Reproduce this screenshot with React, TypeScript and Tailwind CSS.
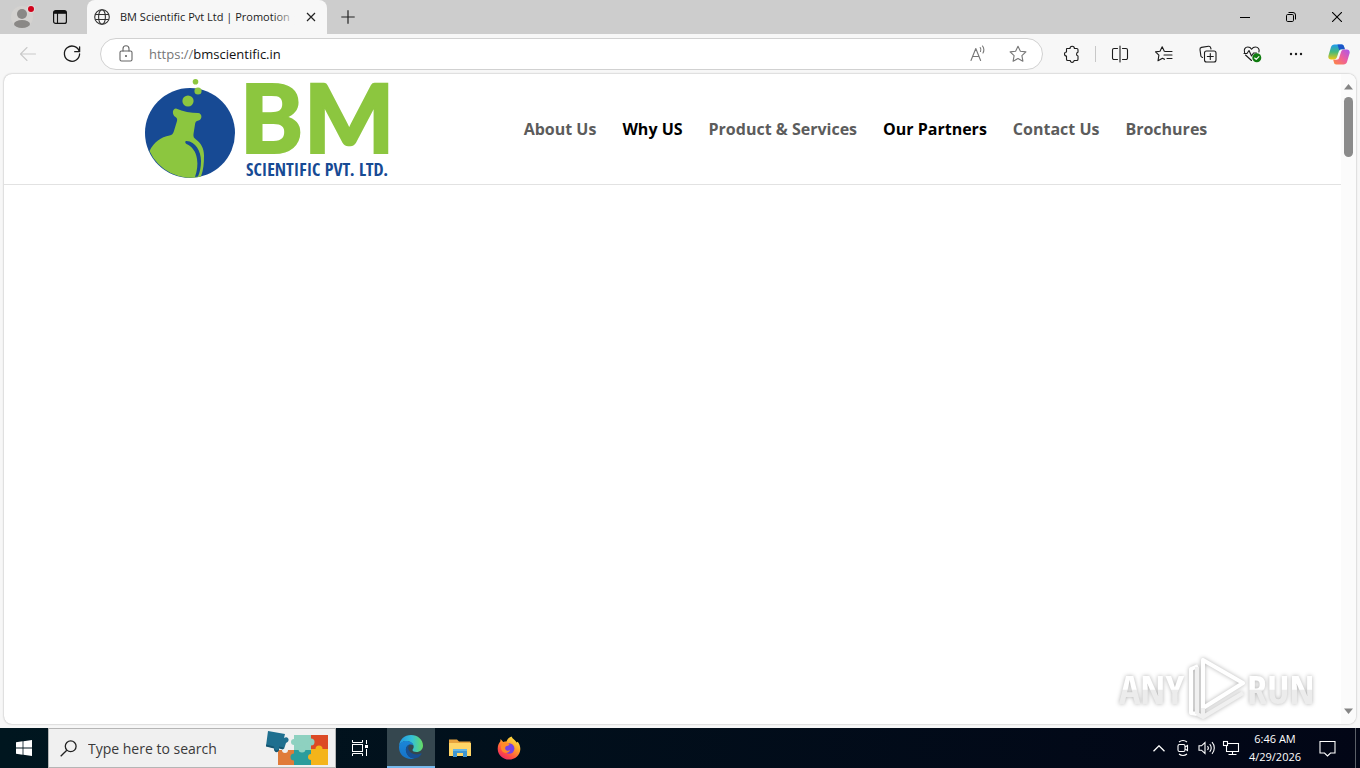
import type { ReactNode } from "react";

type IconButtonProps = {
  label: string;
  className?: string;
  children: ReactNode;
};

type NavLink = {
  title: string;
  active?: boolean;
};

const navLinks: NavLink[] = [
  { title: "About Us" },
  { title: "Why US", active: true },
  { title: "Product & Services" },
  { title: "Our Partners", active: true },
  { title: "Contact Us" },
  { title: "Brochures" },
];

const IconButton = ({ label, className = "", children }: IconButtonProps) => (
  <button
    aria-label={label}
    className={`flex shrink-0 items-center justify-center ${className}`}
  >
    {children}
  </button>
);

/* 20x20 line icon */
const Line = ({ children, color = "#1b1b1b" }: { children: ReactNode; color?: string }) => (
  <svg
    width="20"
    height="20"
    viewBox="0 0 20 20"
    fill="none"
    stroke={color}
    strokeWidth="1.1"
    strokeLinecap="round"
    strokeLinejoin="round"
  >
    {children}
  </svg>
);

const TabStrip = () => (
  <div className="flex h-[34px] shrink-0 bg-[#cdcdcd]">
    <div className="flex w-[87px] items-center">
      <IconButton label="Profile" className="h-full w-11">
        <svg width="28" height="28" viewBox="0 0 28 28">
          <circle cx="14" cy="14" r="11" fill="#d4d2d0" />
          <circle cx="14" cy="11" r="5" fill="#8a8886" />
          <ellipse cx="14" cy="21" rx="8" ry="4" fill="#8a8886" />
          <circle cx="23" cy="6" r="4" fill="#e4d6d6" />
          <circle cx="23" cy="6" r="3" fill="#d0021b" />
        </svg>
      </IconButton>
      <IconButton label="Tab actions" className="h-full w-8">
        <svg width="16" height="16" viewBox="0 0 16 16" fill="none" stroke="#111">
          <rect x="1.6" y="1.6" width="12.8" height="12.8" rx="2" strokeWidth="1.2" />
          <path d="M2 3.4h12" strokeWidth="2.8" />
          <path d="M5.5 4v10" strokeWidth="1.1" />
        </svg>
      </IconButton>
    </div>

    <div className="flex w-60 items-center rounded-t-lg bg-[#f7f7f7] pr-2 pl-[7px]">
      <svg width="16" height="16" viewBox="0 0 16 16" fill="none" stroke="#333" strokeWidth="1.1" className="shrink-0">
        <circle cx="8" cy="8" r="7.3" />
        <ellipse cx="8" cy="8" rx="3.4" ry="7.3" />
        <path d="M1.3 5.5h13.4M1.3 10.5h13.4" />
      </svg>
      <span className="relative ml-[10px] flex-1 text-[11px] whitespace-nowrap text-[#1b1b1b]">
        BM Scientific Pvt Ltd | Promotion
        <span className="absolute inset-y-0 right-[6px] w-6 bg-linear-to-r from-transparent to-[#f7f7f7]" />
      </span>
      <IconButton label="Close tab" className="size-4">
        <svg width="10" height="10" viewBox="0 0 10 10" stroke="#222" strokeWidth="1.2">
          <path d="M1 1l8 8M9 1l-8 8" />
        </svg>
      </IconButton>
    </div>

    <IconButton label="New tab" className="w-[42px]">
      <svg width="14" height="14" viewBox="0 0 14 14" stroke="#222" strokeWidth="1.2">
        <path d="M7 .3v13.4M.3 7h13.4" />
      </svg>
    </IconButton>

    <div className="ml-auto flex">
      <IconButton label="Minimize" className="w-[46px]">
        <svg width="10" height="10" viewBox="0 0 10 10" stroke="#000">
          <path d="M0 5.5h10" />
        </svg>
      </IconButton>
      <IconButton label="Restore" className="w-[46px]">
        <svg width="10" height="10" viewBox="0 0 10 10" fill="none" stroke="#000">
          <rect x=".5" y="2.5" width="7" height="7" rx="1.2" />
          <path d="M2.5.5H7A2.5 2.5 0 0 1 9.5 3v4.5" />
        </svg>
      </IconButton>
      <IconButton label="Close" className="w-[46px]">
        <svg width="10" height="10" viewBox="0 0 10 10" stroke="#000" strokeWidth="1.1">
          <path d="M0 0l10 10M10 0L0 10" />
        </svg>
      </IconButton>
    </div>
  </div>
);

const CopilotLogo = () => (
  <svg width="22" height="21" viewBox="0 0 22 21">
    <defs>
      <linearGradient id="cpA" x1="0" y1="0" x2="0" y2="1">
        <stop offset="0" stopColor="#1f9bf0" />
        <stop offset=".5" stopColor="#45b97c" />
        <stop offset="1" stopColor="#f2c811" />
      </linearGradient>
      <linearGradient id="cpB" x1="1" y1="0" x2="0" y2="1">
        <stop offset="0" stopColor="#a855f0" />
        <stop offset=".5" stopColor="#ee5f9c" />
        <stop offset="1" stopColor="#ff8a3c" />
      </linearGradient>
    </defs>
    <path d="M6.5.5h7.2c1.6 0 2 1 2.4 2.3l.7 2.4h-3.3c-1.6 0-2.3 1-2.7 2.3L9 13c-.5 1.6-1.3 2.5-3 2.5H3.2C.8 15.5-.1 13.7.5 11.4L3 3C3.5 1.4 4.6.5 6.5.5z" fill="url(#cpA)" />
    <path d="M9.5.5h4.2c1.6 0 2 1 2.4 2.3l.7 2.4h-3.3c-1.1 0-1.7.4-2.2 1.2z" fill="#1c55c8" />
    <path d="M15.5 20.5H8.3c-1.6 0-2-1-2.4-2.3l-.7-2.4h3.3c1.6 0 2.3-1 2.7-2.3L13 8c.5-1.6 1.3-2.5 3-2.5h2.8c2.4 0 3.3 1.8 2.7 4.1L19 18c-.5 1.6-1.6 2.5-3.5 2.5z" fill="url(#cpB)" />
  </svg>
);

const Toolbar = () => (
  <div className="flex h-10 shrink-0 items-center bg-[#f7f7f7] pl-[6px]">
    <IconButton label="Back" className="h-8 w-11">
      <Line color="#c9c9c9">
        <path d="M17.5 10H2.8M9 3.5L2.5 10 9 16.5" />
      </Line>
    </IconButton>
    <IconButton label="Refresh" className="h-8 w-11">
      <Line>
        <path d="M17.3 7.5A7.6 7.6 0 1 0 17.6 10M17.6 2.8v4.9h-4.9" strokeWidth="1.3" />
      </Line>
    </IconButton>

    <div className="ml-[6px] flex h-8 flex-1 items-center rounded-full border border-[#d1d1d1] bg-white pr-1 pl-[15px]">
      <Line color="#666">
        <rect x="4" y="7" width="12" height="10" rx="1.5" />
        <path d="M7 7V4.8a3 3 0 0 1 6 0V7" />
        <circle cx="10" cy="12" r=".5" fill="#666" />
      </Line>
      <label htmlFor="address" className="ml-[13px] text-[13px] leading-[22px] text-[#767676]">
        https://
      </label>
      <input
        id="address"
        defaultValue="bmscientific.in"
        className="min-w-0 flex-1 text-[13px] leading-[22px] text-[#111] outline-none"
      />
      <IconButton label="Read aloud" className="w-10">
        <Line color="#777">
          <path d="M3 16.5L7.8 4.5l4.800 12M4.700 12.500h6.200M12.200 3.500a3.800 3.800 0 0 1 .3 4M14.500 2a6.600 6.600 0 0 1 .5 7" />
        </Line>
      </IconButton>
      <IconButton label="Add to favorites" className="w-10">
        <Line color="#777">
          <path d="M10 2.200l2.400 5 5.500.7-4 3.800 1 5.500-4.900-2.700-4.900 2.700 1-5.500-4-3.800 5.500-.7z" />
        </Line>
      </IconButton>
    </div>

    <IconButton label="Extensions" className="ml-[6px] w-[46px]">
      <Line>
        <path d="M5 4.500h3a2.200 2.200 0 0 1 4.400 0h2.300a1.300 1.300 0 0 1 1.300 1.300v2.500a1.900 1.900 0 0 0 0 3.700v3.200a1.300 1.300 0 0 1-1.300 1.300h-2.600a1.900 1.900 0 0 1-3.800 0H5.800a1.300 1.300 0 0 1-1.300-1.300V12a2 2 0 0 1 0-4V5a.5.5 0 0 1 .5-.5z" />
      </Line>
    </IconButton>
    <div className="h-4 w-px bg-[#c8c8c8]" />
    <IconButton label="Split screen" className="ml-[2px] w-11">
      <Line>
        <path d="M10 2v16M7.500 4.500H4A1.500 1.500 0 0 0 2.500 6v8A1.500 1.500 0 0 0 4 15.500h3.500M12.500 4.500H16A1.500 1.500 0 0 1 17.500 6v8a1.500 1.500 0 0 1-1.500 1.500h-3.500" />
      </Line>
    </IconButton>
    <IconButton label="Favorites" className="w-11">
      <Line>
        <path d="M12 7.500h6M12.500 11H18M13 14.500h5M11.500 7.500L10.300 7.300 8.200 2.700 6 7.300l-4.500.6 3.400 3.300-.9 5.600 4.500-2.600 2 1.100M10 11h2.500" />
      </Line>
    </IconButton>
    <IconButton label="Collections" className="w-11">
      <Line>
        <rect x="6.500" y="7" width="11.500" height="11" rx="2" />
        <path d="M12.300 9.500v6M9.300 12.500h6M4.500 13.500l-1-.6a2 2 0 0 1-.7-1.500L2 5.700A2 2 0 0 1 3.500 3.400l7-1.100a2 2 0 0 1 2.200 1.500l.3 1.200" />
      </Line>
    </IconButton>
    <IconButton label="Browser essentials" className="w-11">
      <Line>
        <path d="M2.600 8.500C1.500 5.500 3.200 3 5.800 3c1.700 0 3 .8 3.800 2.200C10.500 3.800 11.800 3 13.500 3c2.700 0 4.300 2.500 3.400 5M3.500 11l6 5.500M2 9.500h3l2-3 2.500 5.500 2-3h3" />
        <circle cx="14.800" cy="13.800" r="4.500" fill="#107c10" stroke="none" />
        <path d="M12.700 14l1.500 1.400 2.700-2.800" stroke="#fff" />
      </Line>
    </IconButton>
    <IconButton label="Settings and more" className="w-11">
      <svg width="14" height="4" viewBox="0 0 14 4" fill="#1b1b1b">
        <circle cx="2" cy="2" r="1.200" />
        <circle cx="7" cy="2" r="1.200" />
        <circle cx="12" cy="2" r="1.200" />
      </svg>
    </IconButton>
    <IconButton label="Copilot" className="w-[42px]">
      <CopilotLogo />
    </IconButton>
  </div>
);

const CompanyLogo = () => (
  <svg
    width="244"
    height="100"
    viewBox="0 0 244 100"
    role="img"
    aria-label="BM Scientific Pvt. Ltd."
    className="overflow-visible"
  >
    <circle cx="45" cy="54" r="45" fill="#174a94" />
    <g fill="#8cc63f">
      <circle cx="50.500" cy="2.800" r="2.800" />
      <circle cx="53" cy="12" r="3.600" />
      <circle cx="43" cy="22" r="5.600" />
      <path d="M31 29.500c7 3 15 4.500 22 4.500 4.500.3 4.500 6.500.5 7.500-2.500.5-3.300 1.500-3.500 4L48.500 55c-.3 2.500.3 4 2.500 5.500 5 3.500 8 9 8 16 0 8-.5 14-3 21A45 45 0 0 1 4.500 72C9 63 16 58 24.500 56.500c2.500-.5 3.500-1.500 4.300-4L32 42c.5-2-.2-3.200-1.500-4-4-2.500-3-8.500.5-8.500z" />
    </g>
    <path d="M41.500 62C50.500 62.500 56 72 56 82c0 6-1 11-3 15.500l-3 .5c2-6 3-12 2-18-1-7.500-5-12.500-10.500-15-1.800-1-1.500-3 0-3z" fill="#174a94" />
    <g
      fill="#8cc63f"
      stroke="#8cc63f"
      strokeWidth="2"
      fontFamily="Lato, sans-serif"
      fontWeight="900"
      fontSize="95"
    >
      <text x="95" y="74">B</text>
      <text x="159" y="74">M</text>
    </g>
    <text
      x="101"
      y="97"
      fill="#174a94"
      fontFamily='"Open Sans Condensed", "Liberation Sans Narrow", "Open Sans", sans-serif'
      fontWeight="700"
      fontSize="18"
    >
      SCIENTIFIC PVT. LTD.
    </text>
  </svg>
);

const Watermark = () => (
  <svg
    width="200"
    height="68"
    viewBox="0 0 200 68"
    className="absolute right-[26px] bottom-0 drop-shadow-[0_0_2px_rgba(0,0,0,0.3)]"
  >
    <defs>
      <linearGradient id="wmFill" x1="0" y1="0" x2="0" y2="68" gradientUnits="userSpaceOnUse">
        <stop offset=".49" stopColor="#fff" />
        <stop offset=".5" stopColor="#ececec" />
      </linearGradient>
    </defs>
    <g
      fill="url(#wmFill)"
      fontFamily='"Open Sans Condensed", "Liberation Sans Narrow", sans-serif'
      fontWeight="300"
      fontSize="40"
    >
      <text x="4" y="48">ANY</text>
      <text x="132" y="48">RUN</text>
    </g>
    <g fill="none" stroke="#fff" strokeWidth="4" strokeLinejoin="round">
      <path d="M88 4v48l40-25zM83 10l-7 3v44l6 1" />
      <path d="M82 11v47M82 58l6 3 40-24M88 52v9" stroke="#f0f0f0" />
    </g>
  </svg>
);

const Page = () => (
  <div className="mx-1 mb-1 flex min-h-0 flex-1 overflow-hidden rounded-lg bg-white shadow-[0_0_2px_rgba(0,0,0,0.35)]">
    <main className="relative flex-1">
      <header className="border-b border-[#e2e2e2]">
        <div className="mx-auto flex h-[110px] w-4/5 items-center justify-between pl-[7px]">
          <a href="#home">
            <CompanyLogo />
          </a>
          <nav className="flex gap-[26px] font-['Open_Sans',sans-serif] text-[16px] font-bold">
            {navLinks.map((link) => (
              <a
                key={link.title}
                href="#menu"
                className={`whitespace-nowrap ${link.active ? "text-black" : "text-[#5c5c5c]"}`}
              >
                {link.title}
              </a>
            ))}
          </nav>
        </div>
      </header>
      <Watermark />
    </main>

    {/* scrollbar */}
    <div className="flex w-[15px] flex-col items-center bg-[#fbfbfb] py-[10px]">
      <svg width="9" height="6" viewBox="0 0 9 6" fill="#858585">
        <path d="M0 5.500L4.500 0 9 5.500z" />
      </svg>
      <div className="mt-[7px] h-[60px] w-[9px] rounded-full bg-[#8b8b8b]" />
      <svg width="9" height="6" viewBox="0 0 9 6" fill="#858585" className="mt-auto">
        <path d="M0 .5L4.500 6 9 .5z" />
      </svg>
    </div>
  </div>
);

const PuzzleArt = () => (
  <svg width="64" height="36" viewBox="0 0 64 36">
    <path d="M13 20h16v15H13z" fill="#e07b39" />
    <path d="M29 5h17v16H29z" fill="#8ed1c0" />
    <path d="M46 5h17v15H46z" fill="#dc4a26" />
    <path d="M29 20h18v15H29z" fill="#2a9d9c" />
    <path d="M46 19h17v16H46z" fill="#f4b41a" />
    <circle cx="29" cy="12" r="3" fill="#8ed1c0" />
    <circle cx="46" cy="12" r="3.500" fill="#8ed1c0" />
    <circle cx="37" cy="19" r="3.500" fill="#8ed1c0" />
    <circle cx="54" cy="19" r="3.500" fill="#f4b41a" />
    <circle cx="29" cy="27" r="3.500" fill="#2a9d9c" />
    <circle cx="46" cy="27" r="3" fill="#f4b41a" />
    <circle cx="20" cy="20" r="3" fill="#f0f0f0" />
    <path d="M3 1l17 3-1 4c4-3 7 3 2 5l-2 6-5-1c1 5-5 5-5 0L1 16z" fill="#1f6f8f" />
    <path d="M1 14.500l8 2c0 5 6 5 5 0l5 1-1 2-4-1c0 5-5 5-5 0l-8-2z" fill="#155672" />
  </svg>
);

const EdgeLogo = () => (
  <svg width="26" height="26" viewBox="0 0 26 26">
    <defs>
      <linearGradient id="edA" x1="0" y1=".5" x2="1" y2=".5">
        <stop offset="0" stopColor="#2196e3" />
        <stop offset=".55" stopColor="#35c1d6" />
        <stop offset="1" stopColor="#66dc62" />
      </linearGradient>
      <linearGradient id="edB" x1="0" y1="0" x2="0" y2="1">
        <stop offset="0" stopColor="#1b86d8" />
        <stop offset="1" stopColor="#1573c8" />
      </linearGradient>
    </defs>
    <path d="M1 12C1.500 5.500 6.500 1 13 1c7 0 12 5 12 10.500 0 4-3 6.500-6.500 6.500-2.500 0-4-1-4-2 0-.8 1.200-1.200 1.200-3.200C15.700 9.500 12 7 8.500 7 5 7 2 9 1 12z" fill="url(#edA)" />
    <path d="M1 13.500C1 9.500 4 7 8.500 7c4 0 6.500 2.200 7 4.500-1-.9-2.200-1.300-3.500-1-3 .6-4.500 3.500-4 6.500.7 4.500 4.300 7.500 8.500 7.500-1 .4-2.200.5-3.500.5C6.200 25 1 20 1 13.500z" fill="url(#edB)" />
    <path d="M12 10.500c-2.500 2-2.200 5 .2 7.500 2.800 2.800 7.300 3 10.300 1.500.8-.4 1.300.1.900.8-1.300 2.200-3.900 4.200-6.900 4.200-4.200 0-7.900-3-8.500-7.500-.4-3 1-5.900 4-6.500z" fill="#174f93" />
  </svg>
);

const FolderIcon = () => (
  <svg width="22" height="20" viewBox="0 0 22 20">
    <path d="M0 1.500h8l2 2h11.500V9H0z" fill="#e8a33d" />
    <path d="M0 5h22v13H0z" fill="#ffd567" />
    <path d="M4 19v-8h14v8h-4v-4H8v4z" fill="#3f96d2" />
    <path d="M4 11h14v2H4z" fill="#65b5e5" />
  </svg>
);

const FirefoxLogo = () => (
  <svg width="24" height="24" viewBox="0 0 24 24">
    <defs>
      <linearGradient id="ffA" x1=".85" y1="0" x2=".2" y2="1">
        <stop offset="0" stopColor="#fff04a" />
        <stop offset=".4" stopColor="#ffa329" />
        <stop offset=".75" stopColor="#ff4b43" />
        <stop offset="1" stopColor="#e5236f" />
      </linearGradient>
    </defs>
    <path d="M14.500.5c1 2.500 4 3.800 5.200 6l1-.8c1.700 2.300 2.800 4.800 2.600 7.800C23 19.300 18 23.600 12 23.600S.8 19 .7 13C.6 9.500 2 7 3.300 5.500L3.600 3l2.600 3C7.500 5.600 8.500 5.500 9.500 5.500c.8-2.400 2.500-4.200 5-5z" fill="url(#ffA)" />
    <circle cx="12.200" cy="12.500" r="5.200" fill="#7542e5" />
    <path d="M5 7.500c2.500-2 5.500-1.500 7.500 1-.8 1.300-2.300 1.200-3.500 1.700-.8.8-1 1.800-.8 2.800 1 2 3 2.200 5 1-1 3.200-5.500 4-8 1.300C3.500 13 3.600 10 5 7.500z" fill="#ff8a28" />
  </svg>
);

const Taskbar = () => (
  <footer className="flex h-10 shrink-0 bg-linear-to-r from-[#00161f] to-[#020616]">
    <IconButton label="Start" className="w-12">
      <svg width="16" height="16" viewBox="0 0 16 16" fill="#fff">
        <path d="M0 2.200l6.600-.9v6.200H0zM7.400 1.200L16 0v7.500H7.400zM0 8.400h6.600v6.300L0 13.800zM7.400 8.400H16V16l-8.600-1.200z" />
      </svg>
    </IconButton>
    <div className="flex w-72 items-center border border-[#b5b5b5] bg-[#f0f0f0] pr-[6px] pl-[11px]">
      <svg width="17" height="17" viewBox="0 0 17 17" fill="none" stroke="#222" strokeWidth="1.300" className="shrink-0">
        <circle cx="10.700" cy="6.300" r="5.400" />
        <path d="M6.800 10.200L.7 16.300" />
      </svg>
      <input
        aria-label="Search"
        placeholder="Type here to search"
        className="ml-[11px] min-w-0 flex-1 text-[14px] text-[#333] outline-none placeholder:text-[#3a3a3a]"
      />
      <PuzzleArt />
    </div>
    <IconButton label="Task view" className="mr-[3px] w-12">
      <svg width="18" height="16" viewBox="0 0 18 16" fill="none" stroke="#fff">
        <path d="M1.500 0v2.500h10V0M1.500 16v-2.500h10V16M15.500 0v4M15.500 9v7" />
        <rect x="1.500" y="4.500" width="10" height="7" />
        <path d="M14 5h3v3h-3z" fill="#fff" stroke="none" />
      </svg>
    </IconButton>
    <IconButton label="Microsoft Edge" className="w-12 border-b-2 border-[#76b9ed] bg-[#35474f]">
      <EdgeLogo />
    </IconButton>
    <IconButton label="File Explorer" className="w-[49px]">
      <FolderIcon />
    </IconButton>
    <IconButton label="Firefox" className="w-[49px]">
      <FirefoxLogo />
    </IconButton>

    <div className="ml-auto flex items-center text-white">
      <IconButton label="Show hidden icons" className="w-6">
        <svg width="12" height="7" viewBox="0 0 12 7" fill="none" stroke="#fff" strokeWidth="1.300">
          <path d="M.5 6.300L6 .8l5.500 5.500" />
        </svg>
      </IconButton>
      <IconButton label="Meet now" className="w-6">
        <svg width="14" height="16" viewBox="0 0 14 16" fill="none" stroke="#fff" strokeWidth="1.100">
          <rect x="2" y="4.500" width="7" height="7" rx="1.500" />
          <path d="M9 7l2.500-1.500v5L9 9M3 2c2.500-1.800 5.500-1.800 8 0M3 14c2.500 1.800 5.500 1.800 8 0" />
        </svg>
      </IconButton>
      <IconButton label="Volume" className="w-6">
        <svg width="18" height="14" viewBox="0 0 18 14" fill="none" stroke="#fff" strokeWidth="1.100">
          <path d="M1 4.800h2.500L7 1.500v11L3.500 9.200H1zM9.500 5a3 3 0 0 1 0 4M11.700 3.200a5.500 5.500 0 0 1 0 7.600M14 1.200a8.500 8.500 0 0 1 0 11.600" />
        </svg>
      </IconButton>
      <IconButton label="Network" className="w-6">
        <svg width="18" height="16" viewBox="0 0 18 16" fill="none" stroke="#fff" strokeWidth="1.100">
          <path d="M6 3.500h10.500v8h-12V6M10.500 11.500v3M6.500 14.500h8" />
          <rect x="1.500" y="1.500" width="4" height="4" />
        </svg>
      </IconButton>
      <button className="w-16 text-center text-[11px] leading-[18px] whitespace-nowrap">
        <span className="block">6:46 AM</span>
        <span className="block">4/29/2026</span>
      </button>
      <IconButton label="Notifications" className="mr-2 w-10">
        <svg width="17" height="17" viewBox="0 0 17 17" fill="none" stroke="#fff" strokeWidth="1.100">
          <path d="M1 1.500h15v11.500h-4.500L8.500 16l-3-3H1z" />
        </svg>
      </IconButton>
      <button aria-label="Show desktop" className="h-full w-[5px] border-l border-[#5b6068]" />
    </div>
  </footer>
);

const App = () => {
  return (
    <div className="flex h-screen flex-col overflow-hidden bg-[#f7f7f7] font-['Open_Sans',sans-serif]">
      <TabStrip />
      <Toolbar />
      <Page />
      <Taskbar />
    </div>
  );
};

export default App;
